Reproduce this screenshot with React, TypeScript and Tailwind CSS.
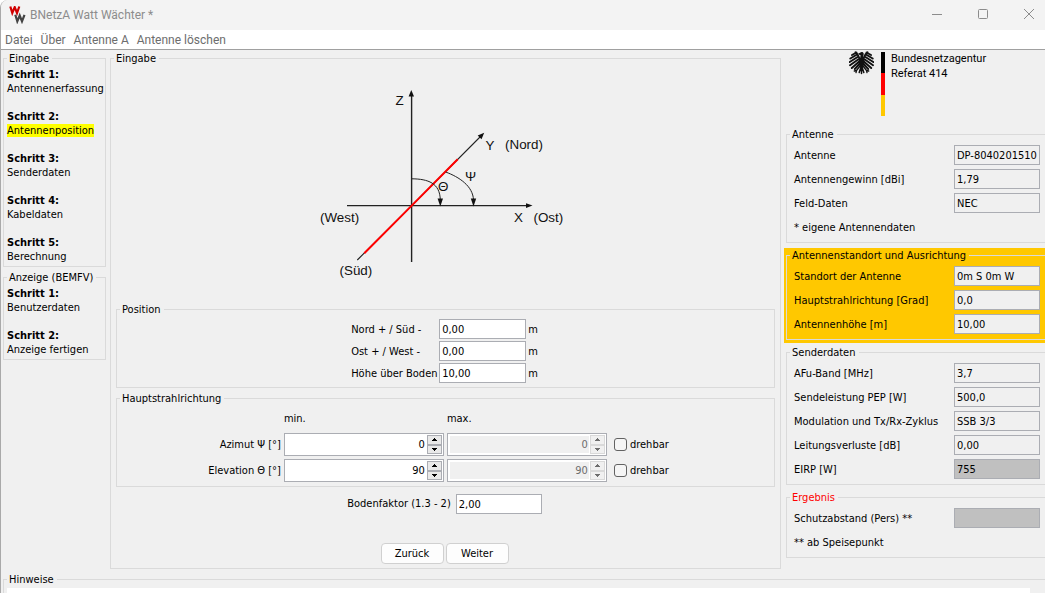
import React, { useId } from "react";

type GroupProps = {
  title: string;
  className?: string;
  contentClass?: string;
  legendClass?: string;
  children?: React.ReactNode;
};

function Group({ title, className = "", contentClass = "", legendClass = "", children }: GroupProps) {
  return (
    <fieldset className={`min-w-0 border border-[#dadada] ${className}`}>
      <legend className={`ml-[3px] h-3.5 pt-px pr-[3px] pl-0.5 ${legendClass}`}>{title}</legend>
      <div className={contentClass}>{children}</div>
    </fieldset>
  );
}

function Step({ n, text, active = false }: { n: number; text: string; active?: boolean }) {
  return (
    <a href="#" className="block whitespace-nowrap">
      <b className="block">Schritt {n}:</b>
      <span className={active ? "bg-[#ffff00]" : ""}>{text}</span>
    </a>
  );
}

function InfoRow({ label, value, dark = false }: { label: string; value: string; dark?: boolean }) {
  const id = useId();
  return (
    <div className="flex h-5 items-center justify-between">
      <label htmlFor={id} className="pt-0.5 whitespace-nowrap">{label}</label>
      <input
        id={id}
        readOnly
        defaultValue={value}
        className={`h-5 w-[86px] shrink-0 border border-[#abadb3] px-0.5 outline-none ${dark ? "bg-[#c0c0c0]" : "bg-[#f0f0f0]"}`}
      />
    </div>
  );
}

function PositionRow({ label, value }: { label: string; value: string }) {
  const id = useId();
  return (
    <>
      <label htmlFor={id} className="w-[86px] pt-0.5 whitespace-nowrap">{label}</label>
      <input id={id} defaultValue={value} className="h-5 w-[87px] border border-[#abadb3] bg-white px-0.5 outline-none" />
      <span className="pt-0.5">m</span>
    </>
  );
}

function Arrow({ up = false }: { up?: boolean }) {
  return (
    <svg width="5" height="3" viewBox="0 0 5 3" fill="currentColor" shapeRendering="crispEdges">
      <path d={up ? "M2 0h1v1h1v1h1v1H0V2h1V1h1z" : "M0 0h5v1H4v1H3v1H2V2H1V1H0z"} />
    </svg>
  );
}

function Spinner({ label, value, disabled = false }: { label: string; value: string; disabled?: boolean }) {
  const btn = disabled
    ? "flex flex-1 items-center justify-center border border-[#d9d9d9] bg-[#f0f0f0] text-[#6d6d6d]"
    : "flex flex-1 items-center justify-center border border-[#abadb3] bg-[#e9e9e9] text-black";
  return (
    <div className="flex h-[23px] w-40 border border-[#abadb3] bg-white p-px">
      <input
        aria-label={label}
        defaultValue={value}
        disabled={disabled}
        className={`m-px min-w-0 flex-1 pr-px text-right outline-none ${disabled ? "bg-[#f0f0f0] text-[#6d6d6d]" : "bg-white"}`}
      />
      <div className="flex w-[15px] flex-col">
        <button aria-label={`${label} erhöhen`} disabled={disabled} className={btn}><Arrow up /></button>
        <button aria-label={`${label} verringern`} disabled={disabled} className={btn}><Arrow /></button>
      </div>
    </div>
  );
}

function DirectionRow({ label, value }: { label: string; value: string }) {
  return (
    <>
      <span className="text-right">{label}</span>
      <Spinner label={`${label} min.`} value={value} />
      <Spinner label={`${label} max.`} value={value} disabled />
      <label className="ml-1 flex items-center gap-[3px]">
        <input type="checkbox" className="size-[13px] appearance-none rounded-[3px] border border-[#626262] bg-[#f5f5f5] checked:bg-[#626262]" />
        drehbar
      </label>
    </>
  );
}

function AxisDiagram() {
  return (
    <svg viewBox="311 65 270 236" className="mx-auto h-[236px] w-[270px]" fill="none" stroke="#222" strokeWidth="1.1">
      <path d="M411.600 95V262" strokeWidth="1.4" />
      <path d="M347 205.600H528" />
      <path d="M357.300 260L411.700 205.600L481 136" />
      <path d="M364.300 253.200L411.700 205.600L457.700 159.300" stroke="#f00" strokeWidth="2" />
      <path d="M412 178.800C428 179 440 183 440.300 200" strokeWidth="1" />
      <path d="M445.700 172C459 177 473 186 473.500 200" strokeWidth="1" />
      <g fill="#111" stroke="none">
        <path d="M411.300 90l2.700 6.500h-5.400z" />
        <path d="M532.500 205.600l-6.500 2.300v-4.600z" />
        <path d="M484.200 132.800l-2.700 6.500-3.800-3.800z" />
        <path d="M440.300 206.500l-2.700-8h5.400z" />
        <path d="M473.500 206.500l-2.700-8h5.400z" />
      </g>
      <g fill="#111" stroke="none" fontSize="13.400" fontFamily="'Liberation Sans', Arial, sans-serif">
        <text x="395.500" y="105">Z</text>
        <text x="485.500" y="150">Y</text>
        <text x="505" y="149">(Nord)</text>
        <text x="465" y="181">Ψ</text>
        <text x="438" y="191">Θ</text>
        <text x="320" y="222">(West)</text>
        <text x="514" y="222">X</text>
        <text x="533.500" y="222">(Ost)</text>
        <text x="339.500" y="275">(Süd)</text>
      </g>
    </svg>
  );
}

const wing = "M11.500 10C10 7 9.500 3 6.500 1.300M7.500 1.500L3 4M8.500 3.300L1.300 7.500M9 5.800L.7 11M9.500 8.300L1 14.300M10.200 10.500L2.800 17M11 12.500L5.800 18";

function Eagle() {
  return (
    <svg viewBox="0 0 25 24" className="h-6 w-[25px]" aria-hidden="true">
      <g stroke="#111" strokeWidth="1.900" strokeLinecap="round" fill="none">
        <path d={wing} />
        <path d={wing} transform="translate(25 0) scale(-1 1)" />
        <path d="M11 15L7.500 19.500M7.500 19.500L5.300 20M7.500 19.500L7 21.700M14 15L17.500 19.500M17.500 19.500L19.700 20M17.500 19.500L18 21.700" strokeWidth="1.300" />
        <path d="M12.500 15V22.500M12 16L10.200 21.500M13 16L14.800 21.500" strokeWidth="1.500" />
      </g>
      <path
        fill="#111"
        d="M9 2.800L11 1.700C12.400.5 14.600 1 14.700 2.700 14.800 4 14 4.800 14.300 6L15.500 9.500 15 13.500 13.300 17h-1.600L10 13.500 9.700 9.500 11.300 6.500 11.500 4 9.600 3.900 10.600 3.200z"
      />
    </svg>
  );
}

const infoGroup = "ml-0.5 border-r-0";
const infoContent = "flex flex-col gap-1 pt-1 pr-[5px] pb-[5px] pl-[7px]";

export default function App() {
  return (
    <div className="flex min-h-screen flex-col overflow-hidden rounded-tl-lg border-l border-[#a9a9a9] bg-[#f0f0f0] font-['DejaVu_Sans_Condensed','DejaVu_Sans',sans-serif] text-[11px] leading-[14px] text-black">
      <header className="flex h-[30px] items-center bg-[#f3f3f3] pl-2 font-['Roboto','Noto_Sans',sans-serif] text-xs text-[#8c8c8c]">
        <svg viewBox="0 0 17 18" className="h-[18px] w-[17px]" fill="none" strokeWidth="2.200" aria-hidden="true">
          <path d="M1.300.500L3.300 7 5.700 1.200 8 7 10.300.500" stroke="#d00000" />
          <path d="M6.300 8.800L8.300 15.300 10.700 9.500 13 15.300 15.500 8.800" stroke="#444" />
        </svg>
        <h1 className="ml-1 flex-1">BNetzA Watt Wächter *</h1>
        <div className="flex gap-[34px] pr-2.5">
          <button aria-label="Minimieren">
            <svg width="12" height="12" viewBox="0 0 12 12" stroke="#8c8c8c"><path d="M1 5.500h10" /></svg>
          </button>
          <button aria-label="Maximieren">
            <svg width="12" height="12" viewBox="0 0 12 12" stroke="#8c8c8c" fill="none"><rect x="1.500" y=".5" width="9" height="9" rx="1" /></svg>
          </button>
          <button aria-label="Schließen">
            <svg width="12" height="12" viewBox="0 0 12 12" stroke="#8c8c8c"><path d="M1 0l10 10M11 0L1 10" /></svg>
          </button>
        </div>
      </header>
      <nav className="flex h-5 items-center gap-2 border-b border-[#a0a0a0] bg-white pl-1 font-['Roboto','Noto_Sans',sans-serif] text-xs text-[#6d6d6d]">
        <button>Datei</button>
        <button>Über</button>
        <button>Antenne A</button>
        <button>Antenne löschen</button>
      </nav>

      <div className="flex pt-px">
        <aside className="ml-0.5 flex w-[103px] flex-col gap-[3px]">
          <Group title="Eingabe" contentClass="flex flex-col gap-3.5 pt-[3px] pb-0.5 pl-[3px]">
            <Step n={1} text="Antennenerfassung" />
            <Step n={2} text="Antennenposition" active />
            <Step n={3} text="Senderdaten" />
            <Step n={4} text="Kabeldaten" />
            <Step n={5} text="Berechnung" />
          </Group>
          <Group title="Anzeige (BEMFV)" contentClass="flex flex-col gap-3.5 pt-[3px] pb-0.5 pl-[3px]">
            <Step n={1} text="Benutzerdaten" />
            <Step n={2} text="Anzeige fertigen" />
          </Group>
        </aside>

        <main className="ml-1 flex min-w-0 flex-1 flex-col">
          <Group title="Eingabe" contentClass="px-[5px] pb-1">
            <AxisDiagram />
            <Group
              title="Position"
              className="mt-px"
              contentClass="grid grid-cols-[auto_auto_auto] items-center justify-center gap-x-0.5 gap-y-0.5 pt-[3px] pr-0.5 pb-1"
            >
              <PositionRow label="Nord + / Süd -" value="0,00" />
              <PositionRow label="Ost + / West -" value="0,00" />
              <PositionRow label="Höhe über Boden" value="10,00" />
            </Group>
            <Group
              title="Hauptstrahlrichtung"
              className="mt-[3px]"
              contentClass="grid grid-cols-[auto_auto_auto_auto] items-center justify-center gap-x-[3px] gap-y-[3px] pt-[7px] pr-3.5 pb-1"
            >
              <span />
              <span className="mb-1">min.</span>
              <span className="mb-1">max.</span>
              <span />
              <DirectionRow label="Azimut Ψ [°]" value="0" />
              <DirectionRow label="Elevation Θ [°]" value="90" />
            </Group>
            <label className="mt-[7px] flex items-center justify-center gap-[5px] pr-0.5">
              Bodenfaktor (1.3 - 2)
              <input defaultValue="2,00" className="h-5 w-[86px] border border-[#abadb3] bg-white px-0.5 outline-none" />
            </label>
            <div className="mt-[29px] flex justify-center gap-0.5 pr-0.5">
              <button className="h-[21px] w-[63px] rounded border border-[#d0d0d0] bg-[#fdfdfd]">Zurück</button>
              <button className="h-[21px] w-[63px] rounded border border-[#d0d0d0] bg-[#fdfdfd]">Weiter</button>
            </div>
          </Group>
        </main>

        <section className="ml-[3px] flex w-[261px] shrink-0 flex-col">
          <div className="flex h-[76px] pl-[65px]">
            <Eagle />
            <div className="mt-px ml-[7px] flex h-16 w-1 flex-col">
              <i className="flex-1 bg-black" />
              <i className="flex-1 bg-[#ff0000]" />
              <i className="flex-1 bg-[#ffc800]" />
            </div>
            <p className="ml-1.5 font-['Roboto',Arial,sans-serif] leading-[15px]">
              Bundesnetzagentur
              <br />
              Referat 414
            </p>
          </div>
          <Group title="Antenne" className={infoGroup} contentClass={infoContent}>
            <InfoRow label="Antenne" value="DP-8040201510" />
            <InfoRow label="Antennengewinn [dBi]" value="1,79" />
            <InfoRow label="Feld-Daten" value="NEC" />
            <p className="h-5 pt-1">* eigene Antennendaten</p>
          </Group>
          <div className="mt-[5px] bg-[#ffc800] pb-[3px]">
            <Group title="Antennenstandort und Ausrichtung" className={infoGroup} contentClass={infoContent}>
              <InfoRow label="Standort der Antenne" value="0m S 0m W" />
              <InfoRow label="Hauptstrahlrichtung [Grad]" value="0,0" />
              <InfoRow label="Antennenhöhe [m]" value="10,00" />
            </Group>
          </div>
          <div className="mt-0.5">
            <Group title="Senderdaten" className={infoGroup} contentClass={infoContent}>
              <InfoRow label="AFu-Band [MHz]" value="3,7" />
              <InfoRow label="Sendeleistung PEP [W]" value="500,0" />
              <InfoRow label="Modulation und Tx/Rx-Zyklus" value="SSB 3/3" />
              <InfoRow label="Leitungsverluste [dB]" value="0,00" />
              <InfoRow label="EIRP [W]" value="755" dark />
            </Group>
          </div>
          <div className="mt-[5px]">
            <Group title="Ergebnis" legendClass="text-[#ff0000]" className={infoGroup} contentClass={infoContent}>
              <InfoRow label="Schutzabstand (Pers) **" value="" dark />
              <p className="h-5 pt-1">** ab Speisepunkt</p>
            </Group>
          </div>
        </section>
      </div>

      <Group title="Hinweise" className="mt-[3px] ml-0.5 flex-1 border-r-0 border-b-0" contentClass="pt-0.5 pr-[15px] pl-[3px]">
        <textarea aria-label="Hinweise" rows={1} className="block h-[5px] w-full resize-none bg-white outline-none" />
      </Group>
    </div>
  );
}
